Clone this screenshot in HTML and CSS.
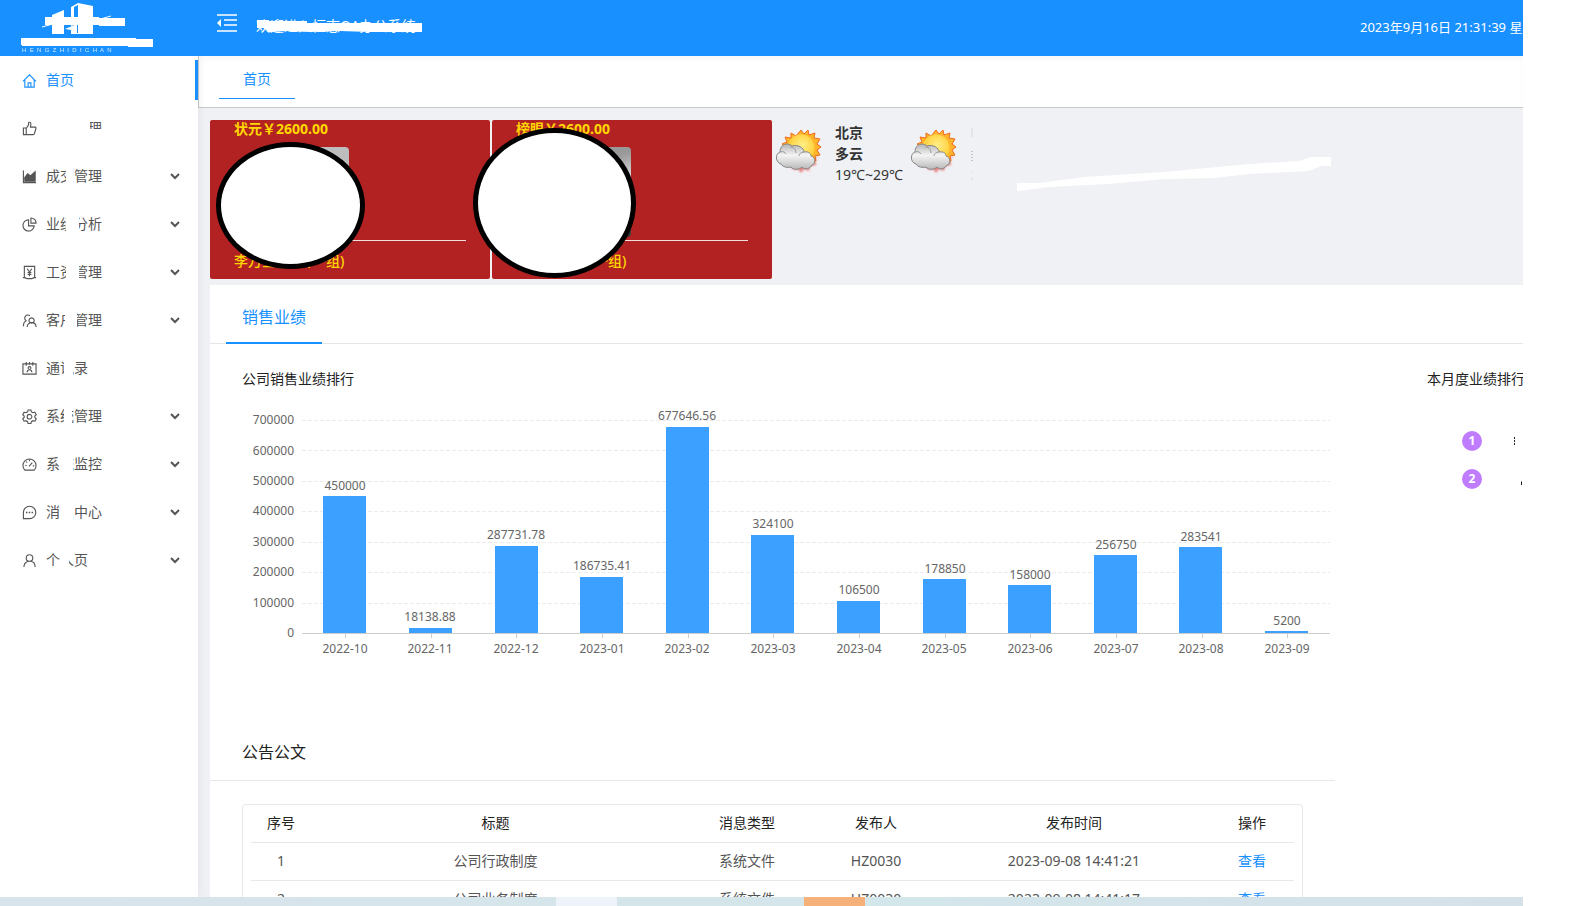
FILE: index.html
```html
<!DOCTYPE html>
<html lang="zh-CN">
<head>
<meta charset="utf-8">
<title>首页</title>
<link rel="stylesheet" href="styles.css">
</head>
<body>
<div class="desktop">
  <header class="header">
    <svg class="logo" viewBox="0 0 198 56" aria-label="logo">
      <path fill="#fff" d="M52 15l12-5v24H52zM71 7l7-4 15 3v28H71V30l-6-1 12-5v9h1V5l-4 2v18l-3 1z"/>
      <path stroke="#fff" fill="none" d="M42 27l11-3M93 21l18-5"/>
      <path fill="#fff" d="M45 17h54v1h26v8H99v-1H45zM21 38h115v1h17v8h-25v-1H22v-1h-1z"/>
      <text x="22" y="52" class="logo-text">H&#160; E&#160; N&#160; G&#160; Z&#160; H&#160; I&#160; D&#160; I&#160; C&#160; H&#160; A&#160; N</text>
    </svg>
    <button class="fold" aria-label="收起菜单">
      <svg viewBox="0 0 20 18"><path d="M0 1h20M7 6h13M7 11h13M0 17h20" stroke="#fff" stroke-width="1.6"/><path d="M0 9l4-4v8z" fill="#fff"/></svg>
    </button>
    <div class="welcome">欢迎进入恒志OA办公系统
      <svg class="scrub" viewBox="0 0 166 14"><path fill="#fff" d="M1 1h12v1h38v2h115v9h-52l-30-1-30 1-24-1-14 1H12l-4-4H1z"/></svg>
    </div>
    <div class="clock">2023年9月16日 21:31:39 星期六</div>
  </header>

  <div class="body">
    <nav class="side">
      <a class="item active" href="#"><svg viewBox="0 0 16 16"><path d="M1 9l7-7 7 7M3 7.500V15h10V7.500M6.500 15v-4.500h3V15"/></svg><span class="label">首页</span></a>
      <a class="item" href="#"><svg viewBox="0 0 16 16"><path d="M1.500 7.500h3v7h-3zM4.500 8l2.500-4V2c0-1 2.500-1 2.500 1L9 6.500h5c1 0 1 1 .7 2l-1.500 5c-.2.700-.7 1-1.200 1H4.500"/></svg><span class="label">点赞管理<i class="cover c-praise"></i><i class="cover c-low"></i></span></a>
      <button class="item"><svg viewBox="0 0 16 16"><path d="M1.500 1.500v13H15"/><path class="solid" d="M3 13V9l3-4 3 2.500L14 3v10z"/></svg><span class="label">成交管理<i class="cover c1"></i></span><svg class="arrow" viewBox="0 0 10 8"><path d="M1 2l4 4 4-4"/></svg></button>
      <button class="item"><svg viewBox="0 0 16 16"><path d="M7 3a6 6 0 1 0 6 6.500H7zM9.500 1v5.500H15A5.500 5.500 0 0 0 9.500 1z"/></svg><span class="label">业绩分析<i class="cover c2"></i></span><svg class="arrow" viewBox="0 0 10 8"><path d="M1 2l4 4 4-4"/></svg></button>
      <button class="item"><svg viewBox="0 0 16 16"><path d="M2.500 1.500h11v12l-3 1h-5l-3-1zM1 13.500h3M12 13.500h3M5.500 4L8 7.500 10.500 4M8 7.500V12M6 8h4M6 10h4"/></svg><span class="label">工资管理<i class="cover c2"></i></span><svg class="arrow" viewBox="0 0 10 8"><path d="M1 2l4 4 4-4"/></svg></button>
      <button class="item"><svg viewBox="0 0 16 16"><path d="M4 8a3 3 0 1 1 4.500-5M1.500 14c0-3 1-5 3.500-6M13 7.500a2.800 2.800 0 1 1-5.500 0 2.800 2.800 0 0 1 5.500 0zM5.500 15c0-3 2-4.700 4.700-4.700S15 12 15 15"/></svg><span class="label">客户管理<i class="cover c3"></i></span><svg class="arrow" viewBox="0 0 10 8"><path d="M1 2l4 4 4-4"/></svg></button>
      <a class="item" href="#"><svg viewBox="0 0 16 16"><path d="M1 3h14v11H1zM4.500 1v4M8 1v3M11.500 1v4M9.500 7.500a1.500 1.500 0 1 1-3 0 1.500 1.500 0 0 1 3 0zM5.500 12c0-3.500 5-3.500 5 0"/></svg><span class="label">通讯录<i class="cover c4"></i></span></a>
      <button class="item"><svg viewBox="0 0 16 16"><path d="M6.500 1h3l.5 2 1.700 1 2-.6 1.500 2.600L13.700 7.500v1.500l1.500 1.500-1.500 2.500-2-.5-1.700 1-.5 2h-3L6 13.500l-1.700-1-2 .5L.8 10.500 2.300 9V7.500L.8 6l1.500-2.600 2 .6L6 3zM10.500 8.200a2.500 2.500 0 1 1-5 0 2.500 2.500 0 0 1 5 0z"/></svg><span class="label">系统管理<i class="cover c5"></i></span><svg class="arrow" viewBox="0 0 10 8"><path d="M1 2l4 4 4-4"/></svg></button>
      <button class="item"><svg viewBox="0 0 16 16"><path d="M3 14A7 7 0 1 1 13 14zM7.500 10L11 6M3.500 9H5M11.500 9.500H13M8 3v1.500M4.500 5l1 1"/></svg><span class="label">系统监控<i class="cover c6"></i></span><svg class="arrow" viewBox="0 0 10 8"><path d="M1 2l4 4 4-4"/></svg></button>
      <button class="item"><svg viewBox="0 0 16 16"><path d="M1.500 14.500V8A6.600 6.600 0 1 1 8 14.500z"/><path d="M4.200 8h1.600M7.200 8h1.600M10.200 8h1.600" stroke-width="1.800"/></svg><span class="label">消息中心<i class="cover c6"></i></span><svg class="arrow" viewBox="0 0 10 8"><path d="M1 2l4 4 4-4"/></svg></button>
      <button class="item"><svg viewBox="0 0 16 16"><path d="M11.500 5.300a3.500 3.500 0 1 1-7 0 3.500 3.500 0 0 1 7 0zM2 15c0-4 2.500-6.200 6-6.200s6 2.200 6 6.200"/></svg><span class="label">个人页<i class="cover c7"></i></span><svg class="arrow" viewBox="0 0 10 8"><path d="M1 2l4 4 4-4"/></svg></button>
    </nav>

    <main class="main">
      <div class="tabs" role="tablist"><button class="tab" role="tab" aria-selected="true">首页</button></div>
      <div class="content">
        <section class="top">
          <div class="medals">
            <article class="medal">
              <strong>状元￥2600.00</strong>
              <div class="photo"></div>
              <p>李万金 (销售一组)</p>
              <i class="oval first"></i>
            </article>
            <article class="medal">
              <strong>榜眼￥2600.00</strong>
              <div class="photo shine"></div>
              <p>王小明 (销售一组)</p>
              <i class="oval second"></i>
            </article>
          </div>
          <div class="weather">
            <svg class="sun" viewBox="0 0 46 46">
              <defs>
                <radialGradient id="sunFill" cx=".55" cy=".4" r=".6"><stop offset="0" stop-color="#ffef8a"/><stop offset="1" stop-color="#ffc928"/></radialGradient>
                <linearGradient id="cloudFill" x2="0" y2="1"><stop offset="0" stop-color="#b5b5b5"/><stop offset=".45" stop-color="#f4f4f4"/><stop offset="1" stop-color="#b9b9b9"/></linearGradient>
                <filter id="glow"><feGaussianBlur stdDeviation="1.300"/></filter>
                <g id="partly">
                  <path d="M14 38l5 3 3-1 3 4 3-4 5 2 1-5 6-1-1-6 4-3z" fill="#e0504a" opacity=".7" filter="url(#glow)"/>
                  <path d="M25 1l3 4 4-4 1 5 6-2-1 5 6 1-3 5 4 3-4 3 3 5-5 1 1 5-6-1-2 5-4-4-4 4-3-4-5 3-1-6-6 1 2-6-5-2 4-3-4-4 5-2-2-5 6 1 0-5 5 3z" fill="#ffb52b" stroke="#ef6a1c"/>
                  <circle cx="25" cy="19" r="13.500" fill="url(#sunFill)"/>
                  <path d="M5 35c-6-2-6-10-1-12 0-8 8-10 12-6 6-2 12 2 12 6 5-1 7 2 7 4 5 1 5 8 0 10-2 4-8 3-9 1-3 3-9 3-11 0-4 1-8 0-10-3z" fill="url(#cloudFill)" stroke="#858585"/>
                  <path d="M4 23c3-1 5 0 6 2M14 18c4 0 6 3 6 6M28 23c-3 0-5 2-5 4" fill="none" stroke="#999"/>
                </g>
              </defs>
              <use href="#partly"/>
            </svg>
            <div class="forecast"><b>北京</b><b>多云</b><span>19℃~29℃</span></div>
            <svg class="sun" viewBox="0 0 46 46"><use href="#partly"/></svg>
            <svg class="ticks" viewBox="0 0 2 54"><path d="M1 2v9M1 45v1M1 52v3" stroke="#d5d8dd"/><path d="M1 25v10" stroke="#999" stroke-dasharray="1 2"/></svg>
            <svg class="stroke" viewBox="0 0 314 36"><path fill="#fff" d="M0 26h22l45-6 80-5 85-8 50-3 12-4h20v9h-10l-12 5-60 3-35 4-50 1-55 5-60 3-30 4-32 1H0z"/></svg>
          </div>
        </section>

        <section class="panel">
          <div class="panel-tabs" role="tablist"><button class="panel-tab" role="tab" aria-selected="true">销售业绩</button></div>
          <div class="columns">
            <div class="left">
              <h4>公司销售业绩排行</h4>
              <svg class="chart" viewBox="0 0 1125 335">
                <path class="grid" d="M92 31.500H1120M92 61.500H1120M92 92.500H1120M92 122.500H1120M92 153.500H1120M92 183.500H1120M92 214.500H1120"/>
                <g text-anchor="end">
                  <text x="84" y="35">700000</text><text x="84" y="66">600000</text><text x="84" y="96">500000</text><text x="84" y="126">400000</text><text x="84" y="157">300000</text><text x="84" y="187">200000</text><text x="84" y="218">100000</text><text x="84" y="248">0</text>
                </g>
                <path class="axis" d="M92 244.500H1120M135.500 245v4M221.500 245v4M306.500 245v4M392.500 245v4M478.500 245v4M563.500 245v4M649.500 245v4M735.500 245v4M820.500 245v4M906.500 245v4M992.500 245v4M1077.500 245v4"/>
                <g class="bars">
                  <rect x="113" y="107" width="43" height="137"/><rect x="199" y="239" width="43" height="5"/><rect x="285" y="157" width="43" height="87"/><rect x="370" y="188" width="43" height="56"/><rect x="456" y="38" width="43" height="206"/><rect x="541" y="146" width="43" height="98"/><rect x="627" y="212" width="43" height="32"/><rect x="713" y="190" width="43" height="54"/><rect x="798" y="196" width="43" height="48"/><rect x="884" y="166" width="43" height="78"/><rect x="969" y="158" width="43" height="86"/><rect x="1055" y="242" width="43" height="2"/>
                </g>
                <g text-anchor="middle">
                  <text x="135" y="101">450000</text><text x="220" y="232">18138.88</text><text x="306" y="150">287731.78</text><text x="392" y="181">186735.41</text><text x="477" y="31">677646.56</text><text x="563" y="139">324100</text><text x="649" y="205">106500</text><text x="735" y="184">178850</text><text x="820" y="190">158000</text><text x="906" y="160">256750</text><text x="991" y="152">283541</text><text x="1077" y="236">5200</text>
                  <text x="135" y="264">2022-10</text><text x="220" y="264">2022-11</text><text x="306" y="264">2022-12</text><text x="392" y="264">2023-01</text><text x="477" y="264">2023-02</text><text x="563" y="264">2023-03</text><text x="649" y="264">2023-04</text><text x="734" y="264">2023-05</text><text x="820" y="264">2023-06</text><text x="906" y="264">2023-07</text><text x="991" y="264">2023-08</text><text x="1077" y="264">2023-09</text>
                </g>
              </svg>
              <h3>公告公文</h3>
              <div class="table-box">
                <table>
                  <colgroup><col class="w-no"><col><col class="w-type"><col class="w-by"><col class="w-time"><col class="w-act"></colgroup>
                  <thead><tr><th>序号</th><th>标题</th><th>消息类型</th><th>发布人</th><th>发布时间</th><th>操作</th></tr></thead>
                  <tbody>
                    <tr><td>1</td><td>公司行政制度</td><td>系统文件</td><td>HZ0030</td><td>2023-09-08 14:41:21</td><td><a href="#">查看</a></td></tr>
                    <tr><td>2</td><td>公司业务制度</td><td>系统文件</td><td>HZ0030</td><td>2023-09-08 14:41:17</td><td><a href="#">查看</a></td></tr>
                  </tbody>
                </table>
              </div>
            </div>
            <aside class="right">
              <h4>本月度业绩排行</h4>
              <ol>
                <li><b>1</b><svg viewBox="0 0 10 20"><path d="M2.500 6v8" stroke="#222" stroke-dasharray="2 1"/></svg></li>
                <li><b>2</b><svg viewBox="0 0 10 20"><path d="M9 16v-3l2-2v5z" fill="#112"/></svg></li>
              </ol>
            </aside>
          </div>
        </section>
      </div>
    </main>
  </div>
  <footer class="taskbar"><i class="task light"></i><i class="task orange"></i></footer>
</div>
</body>
</html>
```
FILE: styles.css
```css
* { box-sizing: border-box; }
body { margin: 0; background: #fff; color: #222; font: 14px/20px "Noto Sans", "Noto Sans CJK SC", sans-serif; }
button { font: inherit; color: inherit; background: none; border: 0; padding: 0; cursor: pointer; }
a { color: #1890ff; text-decoration: none; }
h3, h4, p, ol { margin: 0; padding: 0; font-weight: 400; }
svg { display: block; flex: none; }

.desktop { display: flex; flex-direction: column; height: 100vh; margin-right: 62px; overflow: hidden; }

.header { position: relative; z-index: 2; flex: none; display: flex; align-items: center; height: 56px; overflow: hidden; background: #1890ff; color: #fff; white-space: nowrap; }
.logo { width: 198px; height: 56px; }
.logo-text { font: 6px "Liberation Sans", sans-serif; fill: #fff; opacity: .8; }
.fold { width: 20px; margin: 0 19px; padding-bottom: 10px; }
.fold svg { width: 20px; height: 18px; }
.welcome { position: relative; margin-bottom: 4px; }
.scrub { position: absolute; left: 0; top: 3px; width: 166px; height: 14px; }
.clock { width: 163px; margin: 0 0 2px auto; overflow: hidden; font-size: 13px; }

.body { flex: 1; min-height: 0; display: flex; }
.side { position: relative; z-index: 1; flex: none; width: 198px; padding-top: 4px; display: flex; flex-direction: column; gap: 8px; background: #fff; box-shadow: 2px 0 8px rgba(0, 21, 41, .05); }
.item { display: flex; align-items: center; gap: 9px; height: 40px; padding: 0 19px 0 22px; color: #555; text-align: left; border-right: 3px solid transparent; }
.item svg { width: 15px; height: 15px; fill: none; stroke: currentColor; stroke-width: 1.2; }
.item .solid { fill: currentColor; }
.item .arrow { width: 10px; height: 8px; margin-left: auto; stroke-width: 2; margin-right: -4px; }
.item.active { color: #1890ff; border-color: #1890ff; }
.label { position: relative; }
.cover { position: absolute; top: 0; bottom: 0; background: #fff; }
.c-praise { left: 0; width: 44px; }
.c-low { left: 43px; width: 14px; top: 11px; }
.c1 { left: 20px; width: 7px; }
.c2 { left: 20px; width: 13px; }
.c3 { left: 19px; width: 12px; }
.c4 { left: 18px; width: 9px; }
.c5 { left: 18px; width: 8px; }
.c6 { left: 14px; width: 13px; }
.c7 { left: 14px; width: 9px; }

.main { flex: 1; min-width: 0; display: flex; flex-direction: column; background: #f0f1f5; }
.tabs { flex: none; height: 52px; padding: 4px 20px 0; background: #fff; border: solid #c8c8c8; border-width: 0 0 1px 1px; box-shadow: inset 0 3px 4px rgba(0, 0, 0, .03); }
.tab { height: 39px; padding: 0 24px; color: #1890ff; border-bottom: 1px solid #1890ff; }
.content { flex: 1; min-height: 0; padding: 12px 0 0 12px; overflow: hidden; }

.top { display: flex; gap: 4px; margin-bottom: 6px; }
.medals { display: flex; gap: 2px; }
.medal { position: relative; width: 280px; height: 159px; padding: 0 24px; background: #b22222; border-radius: 2px; color: #ffd700; }
.medal strong { display: block; line-height: 18px; }
.photo { width: 90px; height: 90px; margin: 9px 0 3px 25px; border-radius: 4px; background: #bdbdbd; }
.photo.shine { background: linear-gradient(160deg, #999 30%, #d5d5d8 50%, #999 65%, #333); }
.medal p { padding-top: 11px; border-top: 1px solid #f3dede; line-height: 18px; font-weight: 500; }
.oval { position: absolute; z-index: 1; background: #fff; border: 5px solid #000; border-radius: 50%; }
.first { left: 6px; top: 22px; width: 149px; height: 127px; }
.second { left: -19px; top: 8px; width: 163px; height: 150px; }

.weather { display: flex; align-items: flex-start; flex: 1; min-width: 0; color: #333; }
.sun { width: 46px; height: 46px; margin-top: 9px; }
.forecast { display: flex; flex-direction: column; width: 71px; margin: 2px 5px 0 13px; line-height: 21px; white-space: nowrap; }
.ticks { width: 2px; height: 54px; margin: 6px 44px 0 14px; }
.stroke { width: 314px; height: 36px; margin-top: 37px; }

.panel { background: #fff; }
.panel-tabs { height: 59px; padding-left: 16px; border-bottom: 1px solid #e6e6e6; }
.panel-tab { height: 59px; padding: 6px 16px 0; font-size: 16px; color: #1890ff; border-bottom: 2px solid #1890ff; }
.columns { display: flex; }
.left { flex: 1; min-width: 0; }
h4 { padding: 25px 0 0 32px; font-size: 14px; line-height: 20px; white-space: nowrap; }
.chart { width: 100%; height: auto; }
.chart text { font: 12px "Noto Sans", sans-serif; fill: #666; }
.grid { stroke: #ececec; stroke-dasharray: 4 2; }
.axis { stroke: #ccc; }
.bars { fill: #3ba0ff; }
h3 { height: 57px; padding-left: 32px; font-size: 16px; line-height: 56px; border-bottom: 1px solid #e8e8e8; }
.table-box { margin: 23px 32px 0; padding: 0 8px; border: 1px solid #e8e8e8; border-radius: 4px; }
table { width: 100%; table-layout: fixed; border-collapse: collapse; text-align: center; }
th, td { height: 38px; padding: 0; border-bottom: 1px solid #e8e8e8; font-weight: 400; }
th { height: 37px; }
td { color: #555; }
.w-no { width: 60px; }
.w-type { width: 134px; }
.w-by { width: 124px; }
.w-time { width: 272px; }
.w-act { width: 84px; }

.right { flex: none; width: 188px; overflow: hidden; }
.right h4 { padding-left: 92px; }
ol { display: flex; flex-direction: column; gap: 18px; margin: 42px 0 0 127px; list-style: none; }
li { display: flex; gap: 30px; height: 20px; }
li b { width: 20px; height: 20px; border-radius: 50%; background: #c07cff; color: #fff; font-size: 12px; text-align: center; }
li svg { width: 10px; height: 20px; }

.taskbar { position: relative; z-index: 3; flex: none; display: flex; height: 9px; padding-left: 35%; background: linear-gradient(90deg, #d8e4eb, #d3e6ea 60%, #d5e1e9); }
.task { width: 61px; }
.light { margin-left: 23px; background: #edf3f8; }
.orange { margin-left: 187px; background: #f6b07a; }
```
